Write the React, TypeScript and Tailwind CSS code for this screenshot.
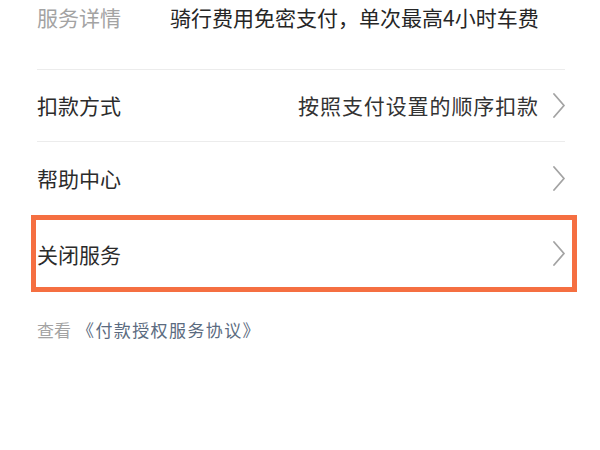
const Chevron = () => (
  <svg width="12" height="25" viewBox="0 0 12 25" fill="none" className="shrink-0">
    <path d="M1 1 L11 12.5 L1 24" stroke="#a3a3a3" strokeWidth="1.8" strokeLinecap="round" strokeLinejoin="round" />
  </svg>
);

const App = () => {
  return (
    <main
      className="w-[600px] h-[450px] bg-white pl-[37px] pr-[35px] overflow-hidden"
      style={{ fontFamily: '"Noto Sans CJK SC", "Noto Sans", sans-serif' }}
    >
      <div className="flex h-[70px] border-b border-[#ececec] text-[21px] leading-[34px]">
        <span className="text-[#a3a3a3] w-[133px] shrink-0">服务详情</span>
        <span className="text-[#262626]">骑行费用免密支付，单次最高4小时车费</span>
      </div>

      <div className="flex h-[72px] items-center justify-between border-b border-[#ececec] text-[21px]">
        <span className="text-[#2b2b2b]">扣款方式</span>
        <div className="flex items-center gap-[14px]">
          <span className="text-[#333333] tracking-[0.9px]">按照支付设置的顺序扣款</span>
          <Chevron />
        </div>
      </div>

      <div className="flex h-[73px] items-center justify-between text-[21px]">
        <span className="text-[#2b2b2b]">帮助中心</span>
        <Chevron />
      </div>

      <div className="relative flex h-[77px] items-center justify-between text-[21px]">
        <span className="text-[#2b2b2b] pt-[2px]">关闭服务</span>
        <Chevron />
        <div className="absolute top-0 bottom-0 -left-[6px] -right-[12px] border-[5px] border-[#f56f41] pointer-events-none" />
      </div>

      <p className="mt-[26px] flex text-[17px] leading-[24px]">
        <span className="text-[#a3a3a3]">查看</span>
        <span className="ml-[6px] text-[#5b6b80] tracking-[1.4px]">《付款授权服务协议》</span>
      </p>
    </main>
  );
};

export default App;
